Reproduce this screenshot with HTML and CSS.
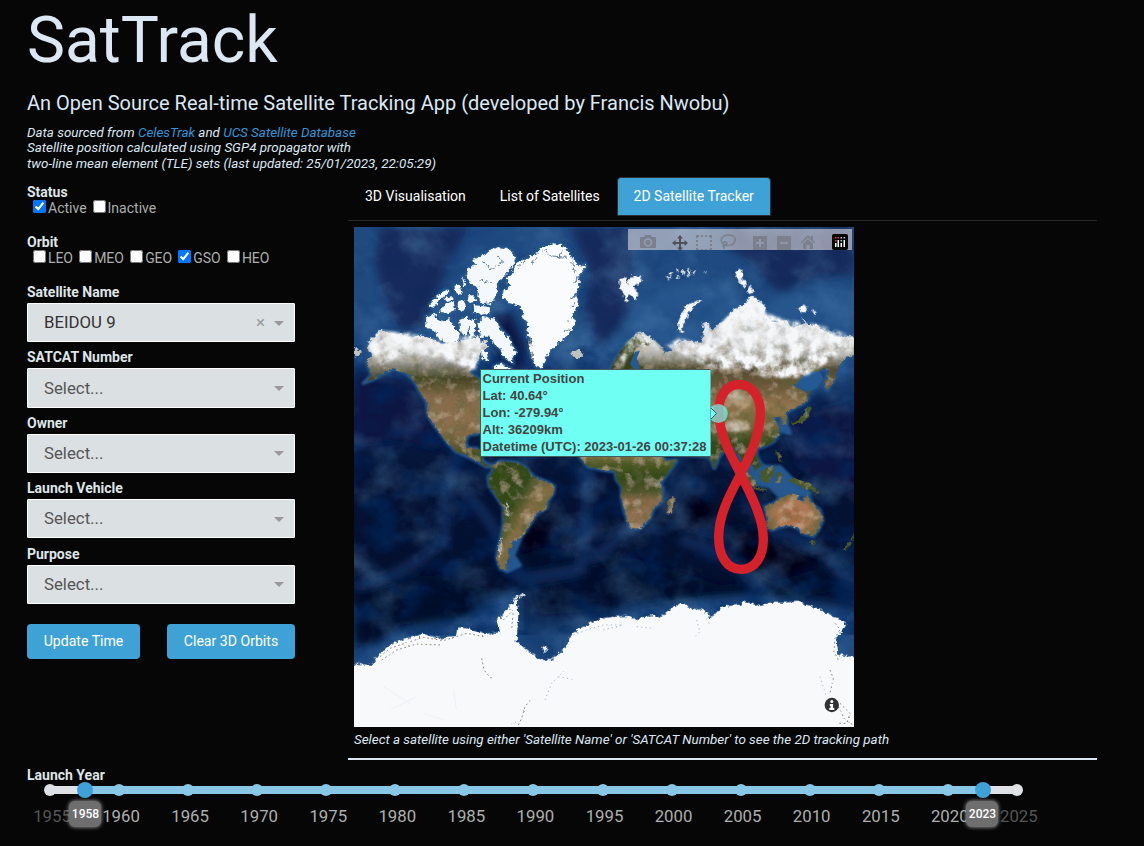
FILE: index.html
```
<!DOCTYPE html>
<html lang="en">
<head>
<meta charset="utf-8">
<title>SatTrack</title>
<link rel="stylesheet" href="styles.css">
</head>
<body>
<header class="header">
  <h1>SatTrack</h1>
  <h2>An Open Source Real-time Satellite Tracking App (developed by Francis Nwobu)</h2>
  <p class="source">Data sourced from <a>CelesTrak</a> and <a>UCS Satellite Database</a><br>Satellite position calculated using SGP4 propagator with<br>two-line mean element (TLE) sets (last updated: 25/01/2023, 22:05:29)</p>
</header>
<main class="content">
  <aside class="filters">
    <section class="checks status"><h3>Status</h3>
      <div class="options"><label><input type="checkbox" checked>Active</label><label><input type="checkbox">Inactive</label></div>
    </section>
    <section class="checks"><h3>Orbit</h3>
      <div class="options orbits"><label><input type="checkbox">LEO</label><label><input type="checkbox">MEO</label><label><input type="checkbox">GEO</label><label><input type="checkbox" checked>GSO</label><label><input type="checkbox">HEO</label></div>
    </section>
    <section class="field"><h3>Satellite Name</h3><div class="select chosen"><span>BEIDOU 9</span><b class="clear">×</b><i class="arrow"></i></div></section>
    <section class="field"><h3>SATCAT Number</h3><div class="select"><span>Select...</span><i class="arrow"></i></div></section>
    <section class="field"><h3>Owner</h3><div class="select"><span>Select...</span><i class="arrow"></i></div></section>
    <section class="field"><h3>Launch Vehicle</h3><div class="select"><span>Select...</span><i class="arrow"></i></div></section>
    <section class="field"><h3>Purpose</h3><div class="select"><span>Select...</span><i class="arrow"></i></div></section>
    <div class="actions"><button>Update Time</button><button class="wide">Clear 3D Orbits</button></div>
  </aside>
  <section class="viewer">
    <nav class="tabs"><a>3D Visualisation</a><a>List of Satellites</a><a class="active">2D Satellite Tracker</a></nav>
    <div class="map">
      <svg class="world" viewBox="354 227 500 500">
        <defs>
          <linearGradient id="sea" x1="0" y1="0" x2="0" y2="1">
            <stop offset="0" stop-color="#1f4a80"/><stop offset=".26" stop-color="#1f4b82"/><stop offset=".36" stop-color="#08204b"/><stop offset=".5" stop-color="#041234"/><stop offset=".72" stop-color="#030f2e"/><stop offset=".82" stop-color="#173f73"/>
          </linearGradient>
          <linearGradient id="america" gradientUnits="userSpaceOnUse" x1="0" y1="490" x2="0" y2="870">
            <stop offset="0" stop-color="#f5f6f7"/><stop offset=".15" stop-color="#d6d7d6"/><stop offset=".26" stop-color="#85827a"/><stop offset=".36" stop-color="#454325"/><stop offset=".5" stop-color="#846b4a"/><stop offset=".75" stop-color="#8d6f4e"/><stop offset="1" stop-color="#3c481d"/>
          </linearGradient>
          <linearGradient id="asia" gradientUnits="userSpaceOnUse" x1="0" y1="-220" x2="0" y2="310">
            <stop offset="0" stop-color="#fbfcfd"/><stop offset=".22" stop-color="#e1e3e6"/><stop offset=".34" stop-color="#aaa9a3"/><stop offset=".41" stop-color="#534a30"/><stop offset=".52" stop-color="#735d3f"/><stop offset=".62" stop-color="#957850"/><stop offset=".74" stop-color="#6c6338"/><stop offset=".82" stop-color="#374a1e"/><stop offset="1" stop-color="#354a1c"/>
          </linearGradient>
          <linearGradient id="africa" gradientUnits="userSpaceOnUse" x1="0" y1="255" x2="0" y2="480">
            <stop offset="0" stop-color="#8d7748"/><stop offset=".12" stop-color="#4c5824"/><stop offset=".3" stop-color="#324817"/><stop offset=".48" stop-color="#4d5428"/><stop offset=".6" stop-color="#866a49"/><stop offset="1" stop-color="#957656"/>
          </linearGradient>
          <linearGradient id="brazil" x1="0" y1="0" x2="1" y2="1">
            <stop offset="0" stop-color="#2f4618"/><stop offset=".38" stop-color="#32491a"/><stop offset=".52" stop-color="#826d45"/><stop offset=".75" stop-color="#7a6d3d"/><stop offset="1" stop-color="#6b5a3a"/>
          </linearGradient>
          <radialGradient id="outback"><stop offset="0" stop-color="#b06e4c"/><stop offset=".65" stop-color="#a97a56"/><stop offset="1" stop-color="#77673f"/></radialGradient>
          <filter id="coast" x="-5%" y="-5%" width="110%" height="110%">
            <feTurbulence type="fractalNoise" baseFrequency=".26" numOctaves="3" seed="8" result="n"/>
            <feDisplacementMap in="SourceGraphic" in2="n" scale="5" xChannelSelector="R" yChannelSelector="G" result="d"/>
            <feTurbulence type="fractalNoise" baseFrequency=".09" numOctaves="6" seed="4" result="t"/>
            <feColorMatrix in="t" type="matrix" values="0 0 0 0 .1  0 0 0 0 .12  0 0 0 0 .04  1.6 0 0 0 -.7" result="k"/>
            <feComposite in="k" in2="d" operator="in" result="kk"/>
            <feColorMatrix in="t" type="matrix" values="0 0 0 0 .68  0 0 0 0 .54  0 0 0 0 .38  0 1.3 0 0 -.68" result="l"/>
            <feComposite in="l" in2="d" operator="in" result="ll"/>
            <feMerge><feMergeNode in="d"/><feMergeNode in="kk"/><feMergeNode in="ll"/></feMerge>
          </filter>
          <filter id="ice" x="-5%" y="-5%" width="110%" height="110%">
            <feTurbulence type="fractalNoise" baseFrequency=".25" numOctaves="3" seed="11" result="n"/>
            <feDisplacementMap in="SourceGraphic" in2="n" scale="6" xChannelSelector="R" yChannelSelector="G"/>
          </filter>
          <filter id="snow" x="-5%" y="-5%" width="110%" height="110%">
            <feGaussianBlur in="SourceGraphic" stdDeviation="1.5" result="s"/>
            <feTurbulence type="fractalNoise" baseFrequency=".09" numOctaves="6" seed="17"/>
            <feColorMatrix type="matrix" values="0 0 0 0 .92  0 0 0 0 .93  0 0 0 0 .95  2.6 0 0 0 -.7"/>
            <feComposite in2="s" operator="in"/>
          </filter>
          <filter id="swell" x="0" y="0" width="100%" height="100%">
            <feTurbulence type="fractalNoise" baseFrequency=".02 .024" numOctaves="6" seed="21"/>
            <feColorMatrix type="matrix" values="0 0 0 0 .1  0 0 0 0 .26  0 0 0 0 .48  2.4 0 0 0 -1.1"/>
          </filter>
          <filter id="trench" x="0" y="0" width="100%" height="100%">
            <feTurbulence type="fractalNoise" baseFrequency=".03 .04" numOctaves="5" seed="33"/>
            <feColorMatrix type="matrix" values="0 0 0 0 0  0 0 0 0 .02  0 0 0 0 .11  0 3.2 0 0 -1.5"/>
          </filter>
          <filter id="soft" x="-20%" y="-20%" width="140%" height="140%"><feGaussianBlur stdDeviation="4"/></filter>
          <filter id="shelf" x="-20%" y="-20%" width="140%" height="140%"><feGaussianBlur stdDeviation="1.3"/></filter>
          <path id="na" d="M85 515L120 480 150 490 180 492 205 505 240 495 270 505 300 520 340 515 370 510 400 505 415 498 422 520 442 508 444 530 420 550 415 575 395 590 392 612 440 640 540 650 520 720 460 770 415 790 385 795 376 815 383 835 410 835 425 850 428 872 445 885 460 887 440 890 400 868 345 842 320 815 298 785 278 760 264 735 260 695 240 665 225 635 200 610 160 595 130 610 100 628 70 640 95 615 80 575 100 555 85 540Z"/>
          <path id="sa" d="M455 260L480 243 530 248 560 265 580 290 620 305 643 318 640 340 622 365 620 385 590 400 575 425 555 455 540 475 515 485 520 500 505 510 510 525 498 545 500 572 480 565 470 530 480 490 490 430 490 380 470 350 448 318 445 290 460 275Z"/>
          <path id="af" d="M-50 200L-30 262-5 290 40 300 75 305 80 330 95 350 95 385 105 430 120 475 150 475 180 445 190 415 215 395 218 355 210 340 240 300 260 272 225 270 200 240 150 200Z"/>
          <path id="as" d="M65-3L80-40 110-80 150-115 180-100 215-70 222-50 245-60 270-85 300-90 335-80 342-120 335-140 355-145 360-120 380-130 405-150 430-180 460-195 485-222 510-205 528-190 520-150 550-145 590-150 605-125 640-140 680-135 730-100 765-102 795-100 795-45 770-40 740 0 735 25 710 60 705 40 718-5 690 0 650 25 610 45 640 60 655 85 640 100 620 110 600 120 585 130 592 155 580 165 570 140 550 140 565 165 565 195 550 215 520 230 500 235 500 260 515 285 495 300 480 270 470 270 475 310 492 346 465 320 450 265 430 230 415 225 395 250 385 265 373 294 360 260 250 250 130 110 65 40Z"/>
          <path id="oz" d="M525 410L550 400 570 385 600 370 625 375 625 390 640 395 650 370 665 400 690 420 698 450 685 480 670 498 640 490 625 475 600 465 570 470 545 480 530 470 532 445Z"/>
          <path id="gr" d="M640 220L665 225 680 235 695 262 720 290 735 280 738 292 715 320 718 350 705 375 715 400 700 430 705 460 690 490 660 515 630 545 615 570 605 592 590 592 580 570 568 540 578 510 560 500 565 470 550 440 548 415 530 405 510 400 490 385 485 368 510 350 500 335 520 300 530 280 560 265 590 250 600 235Z"/>
          <path id="an" d="M30 280L95 285 118 250 150 225 180 212 250 192 300 205 350 200 355 172 380 175 440 195 480 185 470 150 490 135 510 110 530 88 535 130 530 215 560 240 605 270 635 270 680 230 690 200 720 175 760 155 800 142 860 138 890 148 940 135 960 145 980 125 1020 100 1050 115 1090 120 1112 142 1130 130 1145 110 1200 105 1210 92 1260 108 1290 98 1330 98 1375 95 1430 115 1470 135 1500 150 1520 165 1500 190 1490 210 1495 255 1550 262 1550 490 30 490Z"/>
          <g id="isles">
            <path d="M455 240L480 232 510 240 528 262 520 285 500 310 480 330 470 345 475 370 455 400 430 402 412 380 415 350 395 345 380 320 385 295 405 285 400 270 430 255Z"/>
            <path d="M258 440L285 432 290 450 310 455 330 445 340 470 360 490 350 515 320 518 290 505 285 480 260 475Z"/>
            <path d="M412 460L430 440 465 450 480 475 505 500 515 525 528 545 515 565 520 580 490 560 485 540 465 525 450 500 420 500Z"/>
            <path d="M398 405L445 410 452 428 420 434 400 425ZM358 450L380 442 395 460 375 500 360 480ZM268 405L290 382 318 358 326 366 298 392 280 414ZM342 345L360 345 366 374 350 370ZM320 400L342 394 345 420 318 430 298 425ZM350 405L362 388 376 395 378 418 360 422ZM380 380L400 375 410 395 388 398ZM392 450L406 446 404 500 386 508ZM310 385L340 378 340 390 316 394ZM460 590L485 580 515 598 470 604ZM425 540L440 545 445 570 430 568ZM366 320L380 345 372 350Z"/>
          </g>
        </defs>
        <rect x="354" y="227" width="500" height="500" fill="url(#sea)"/>
        <g filter="url(#soft)">
          <path d="M380 227L470 227 450 260 430 310 424 328 400 330 385 305 375 260ZM570 227L632 227 632 320 622 355 598 345 585 310 590 270ZM730 227L854 227 854 275 815 277 795 295 775 290 750 260 730 250Z" fill="#122b5b"/>
          <path d="M485 320L510 312 525 345 525 370 500 365ZM354 370L410 382 430 420 440 450 400 440 354 445ZM782 420L854 400 854 490 800 470Z" fill="#071943"/>
          <path d="M354 580L440 575 490 590 470 615 400 625 375 645 354 645ZM520 545L640 560 720 585 780 580 850 560 854 590 780 597 740 590 700 600 610 610 580 612 540 615Z" fill="#020b29"/>
          <path d="M460 445Q440 500 445 540Q400 580 354 585M460 490Q490 510 520 580M585 465Q590 520 580 570L520 580M590 560Q650 520 670 470L700 440M680 540Q730 550 760 590M770 530Q820 540 854 590" fill="none" stroke="#122f5e" stroke-width="9"/>
          <path d="M510 525L535 495 555 510 545 545 525 555ZM690 500L710 500 712 525 690 530ZM730 520L780 545 830 555 780 580 750 570Z" fill="#010519"/>
          <path d="M354 660L410 635 465 623 500 595 520 590 520 640 550 662 580 640 620 612 700 600 760 595 820 605 854 610 854 660 354 680Z" fill="#1e4a80"/>
          <path d="M600 350L622 326 635 295 660 288 700 280 730 290 760 310 800 285 854 290 854 370 805 395 780 360 640 355Z" fill="#26568d"/>
        </g>
        <rect x="354" y="227" width="500" height="500" filter="url(#swell)" opacity=".45"/>
        <rect x="354" y="345" width="500" height="290" filter="url(#trench)" opacity=".6"/>
        <rect x="354" y="227" width="500" height="118" filter="url(#trench)" opacity=".14"/>
        <g fill="#25588f" stroke="#25588f" stroke-width="11" filter="url(#shelf)" stroke-linejoin="round">
          <g transform="translate(340 170) scale(.33333)"><use href="#na"/><use href="#gr"/><use href="#isles"/></g>
          <g transform="translate(340 380) scale(.33333)"><use href="#sa"/><path d="M500 575L540 555 512 515 515 488 540 478Z"/></g>
          <g transform="translate(590 370) scale(.33333)"><use href="#af"/><use href="#as"/><use href="#oz"/><path d="M560 180L600 190 580 140ZM480 270L530 290 570 290 610 330 660 370 575 385 540 350 490 340Z"/></g>
        </g>
        <g filter="url(#coast)">
          <use href="#na" transform="translate(340 170) scale(.33333)" fill="url(#america)"/>
          <use href="#sa" transform="translate(340 380) scale(.33333)" fill="url(#brazil)"/>
          <g transform="translate(590 370) scale(.33333)">
            <use href="#af" fill="url(#africa)"/><use href="#as" fill="url(#asia)"/><use href="#oz" fill="url(#outback)"/>
            <path d="M245 378L257 380 245 430 230 430 232 400Z" fill="#7c6342"/>
            <path d="M600 160L630 145 645 130 655 105 665 110 650 150 620 165ZM648 45L658 55 656 90 648 85ZM435 260L450 278 488 325 505 348 490 350 465 330ZM508 305L530 295 550 285 552 305 540 335 515 332ZM490 352L530 357 530 364 492 358ZM560 308L575 310 568 340 560 338ZM555 240L568 245 575 280 562 260ZM590 325L620 328 660 340 695 372 660 362 620 345ZM660 512L675 514 670 530ZM790 492L798 498 780 515ZM778 515L785 522 762 544 758 540Z" fill="#48572b"/>
            <path d="M65-3L80-40 110-80 150-110 180-75 145-80 130-50 148-20 160 0Z" fill="#34401c"/>
          </g>
        </g>
        <g transform="translate(590 370) scale(.33333)">
          <path d="M132-2L120-20 135-55 150-58 140-35 150-2ZM620 40L650 5 690 5 700 25 680 55 650 65Z" fill="#245a94"/>
          <g filter="url(#soft)" opacity=".8"><path d="M405 65L450 55 490 85 480 110 430 105ZM400 150L460 150 485 180 440 185Z" fill="#c4ae90" opacity=".6"/></g>
        </g>
        <g filter="url(#snow)">
          <path d="M368 347L381 331 410 333 435 340 475 335 482 343 476 370 470 370 440 358 405 352 382 366Z" fill="#fff"/>
          <path d="M665 346L680 338 703 345 717 326 735 310 753 297 765 312 785 320 820 325 854 337 854 350 835 358 810 374 795 378 768 378 745 370 710 368 685 355Z" fill="#fff"/>
          <path d="M616 365L627 343 640 332 656 344 660 352 640 345 627 357 622 368Z" fill="#fff" opacity=".8"/>
          <path d="M726 394L736 389 746 398 734 401ZM722 425L735 420 750 424 745 431 728 433Z" fill="#fff" opacity=".45"/>
        </g>
        <g filter="url(#ice)">
          <g transform="translate(340 170) scale(.33333)">
            <use href="#gr" fill="#f9fbfc"/><use href="#isles" fill="#f4f8fa"/>
            <path d="M690 548L710 538 735 548 720 562 700 560ZM42 530L66 545 50 560 42 555Z" fill="#bfc2bd"/>
            <path d="M720 315L700 340M712 375L690 385M705 400L688 415M700 440L680 455M690 475L672 485M535 290L560 272M575 285L588 265M610 240L635 260M640 258L680 262M670 240L655 262M695 275L705 310M470 258L490 275 450 300M430 275L450 290M420 330L450 340" fill="none" stroke="#5b7ca3" stroke-width="3"/>
            <path d="M566 500L572 530M575 545L582 570" fill="none" stroke="#8b8474" stroke-width="5"/>
          </g>
          <g transform="translate(590 370) scale(.33333)" fill="#f5f7f8">
            <path d="M88-275L105-278 112-258 120-280 152-282 155-266 130-252 145-225 140-210 120-225 108-204 98-235 90-245ZM235-288L248-292 242-282ZM258-305L265-302 262-290ZM275-300L284-298 278-285ZM260-282L274-280 262-275ZM290-290L298-305 302-285 292-278ZM308-300L318-302 310-285ZM228-280L240-278 233-272ZM438-300L450-305 460-280 450-270 438-278ZM445-272L465-270 468-248 452-250ZM478-258L492-235 470-230ZM318-208L335-208 310-190 290-160 276-125 284-110 265-118 265-145 285-190ZM622-185L645-195 655-180 640-172ZM665-180L685-172 675-165ZM640-155L655-145 638-145ZM342-296L350-294 344-290Z"/>
          </g>
          <g transform="translate(340 380) scale(.33333)"><path d="M515 655L550 642M478 530L483 475M500 365L503 410" fill="none" stroke="#dfe7ec" stroke-width="3"/></g>
          <g transform="translate(340 570) scale(.33333)">
            <use href="#an" fill="#f7f9fb"/><path d="M535 85L555 72M520 95L530 78M610 232L622 236 614 243Z" stroke="#f4f7f9" stroke-width="5"/>
          </g>
        </g>
        <g transform="translate(340 570) scale(.33333)" fill="none" stroke-width="3" filter="url(#ice)">
          <path d="M120 260L150 235 210 215 250 202 310 212 380 190 430 200M125 270L170 240 230 222 300 225M425 265L432 300 450 322 460 325M535 465L545 445 555 410 575 385M515 462L528 456M490 150L520 120 515 180M1485 160L1500 178 1485 205 1482 245 1495 270M1470 300L1480 325 1470 370M1500 400L1530 430 1520 460 1490 460M1495 410L1515 450 1540 465" stroke="#8c8675" stroke-dasharray="5 8"/>
          <path d="M615 390L635 340 680 295M655 320L700 328M1070 150L1080 185 1065 200M1100 145L1110 165M1440 320L1460 380M700 195L740 180 790 165 850 165M790 180L850 165M890 170L940 175" stroke="#a8bed3" stroke-dasharray="4 9"/>
          <path d="M130 350L210 400M150 420L230 380M250 430L310 450M340 360L350 420" stroke="#eef1f3"/>
        </g>
        <path d="M447 43C485 43 512 80 511 130C510 200 475 265 452 312C425 365 386 430 386 500C386 560 412 598 453 598C495 598 521 560 520 505C519 440 480 370 452 312C425 260 390 200 386 130C384 80 410 43 447 43Z" transform="translate(590 370) scale(.33333)" fill="none" stroke="#d5222a" stroke-width="28"/>
        <circle cx="718.3" cy="413.5" r="9.5" fill="#6ffff3" opacity=".68"/>
        <path d="M710 407L716.5 413.5 710 420" fill="#6ffff3" stroke="#485b5b"/>
        <g transform="translate(831.8 705)"><circle r="7.2" fill="#303334"/><circle cy="-3.6" r="1.5" fill="#fff"/><path d="M-2-1H1.3V3H2.5V5H-2.5V3H-1.3V1H-2Z" fill="#fff"/></g>
      </svg>
      <div class="modebar">
        <svg class="camera" viewBox="0 0 16 16"><path fill-rule="evenodd" d="M1 3h3l1.2-2h5.6L12 3h3q1 0 1 1v9q0 1-1 1H1q-1 0-1-1V4q0-1 1-1zm7 1.2a4.2 4.2 0 1 0 0 8.4 4.2 4.2 0 0 0 0-8.4zm0 1.500a2.7 2.7 0 1 1 0 5.4 2.7 2.7 0 0 1 0-5.4z"/></svg>
        <svg class="pan" viewBox="0 0 16 16"><path d="M8 0l3 3.500H9V7h3.500V5L16 8l-3.500 3V9H9v3.500h2L8 16l-3-3.500h2V9H3.500v2L0 8l3.500-3v2H7V3.500H5z"/></svg>
        <svg class="box" viewBox="0 0 16 16"><path d="M0 0h3v2H2v1H0zM5 0h2v2H5zM9 0h2v2H9zM13 0h3v3h-2V2h-1zM0 5h2v2H0zM14 5h2v2h-2zM0 9h2v2H0zM14 9h2v2h-2zM0 13h2v1h1v2H0zM5 14h2v2H5zM9 14h2v2H9zM14 13h2v3h-3v-2h1z"/></svg>
        <svg class="lasso" viewBox="0 0 16 16"><path d="M3 10C-1 6 2 1 9 1c5 0 7 3 6 6-1 4-7 6-12 3m1-2c2-1 4 1 2 3s-4-1-2-3m-1 3c0 2 2 2 1 4" fill="none" stroke="currentColor" stroke-width="1.5"/></svg>
        <svg class="plus" viewBox="0 0 16 16"><path fill-rule="evenodd" d="M1 1h14v14H1zM7 4v3H4v2h3v3h2V9h3V7H9V4z"/></svg>
        <svg class="minus" viewBox="0 0 16 16"><path fill-rule="evenodd" d="M1 1h14v14H1zM4 7v2h8V7z"/></svg>
        <svg class="home" viewBox="0 0 16 16"><path d="M8 1l3 3V2h2v4l2.500 2.500-1 1L8 3.500 1.500 9.500l-1-1zM8 5l5 4.500V15H9.500v-4h-3v4H3V9.500z"/></svg>
        <svg class="plotly" viewBox="0 0 16 16"><rect width="16" height="16" rx="2" fill="#000"/><path d="M3 9h1.500v4H3zM5.500 6H7v7H5.500zM8.500 9H10v4H8.500zM11.500 6H13v7h-1.500z" fill="#fff"/><path d="M3 3h1.500v1.500H3zM3 6h1.500v1.500H3zM5.500 3H7v1.500H5.500z" fill="#ee2e69"/><path d="M8.500 3H10v1.500H8.500zM8.500 6H10v1.500H8.500zM11.500 3H13v1.500h-1.500z" fill="#a9cbe0"/></svg>
      </div>
      <div class="hover">Current Position<br>Lat: 40.64°<br>Lon: -279.94°<br>Alt: 36209km<br>Datetime (UTC): 2023-01-26 00:37:28</div>
    </div>
    <p class="caption">Select a satellite using either 'Satellite Name' or 'SATCAT Number' to see the 2D tracking path</p>
  </section>
</main>
<footer class="launch">
  <h3>Launch Year</h3>
  <div class="slider">
    <div class="track"></div>
    <div class="dots"><i class="off"></i><i></i><i></i><i></i><i></i><i></i><i></i><i></i><i></i><i></i><i></i><i></i><i></i><i></i><i class="off"></i></div>
    <span class="handle start"></span><span class="handle end"></span>
    <div class="years"><span class="off">1955</span><span>1960</span><span>1965</span><span>1970</span><span>1975</span><span>1980</span><span>1985</span><span>1990</span><span>1995</span><span>2000</span><span>2005</span><span>2010</span><span>2015</span><span>2020</span><span class="off">2025</span></div>
    <b class="tip start">1958</b><b class="tip end">2023</b>
  </div>
</footer>
</body>
</html>
```
FILE: styles.css
```
* { box-sizing: border-box; }
body { margin: 0; height: 846px; overflow: hidden; padding: 0 47px 0 27px; background: #060606; color: #adafae; font: 14px/16px Roboto, sans-serif; }
h1, h2, h3, p { margin: 0; }
h1 { padding-top: 2px; height: 92px; font-size: 64px; line-height: 77px; font-weight: 400; color: #dbe8f3; }
h2 { height: 32.6px; font-size: 20px; line-height: 23px; font-weight: 400; color: #dbe8f3; }
.source { height: 53.4px; font-size: 13.4px; line-height: 15.6px; font-style: italic; color: #dbe8f3; }
.source a { color: #3296d8; }
.content { display: grid; grid-template-columns: 268px 749px; column-gap: 53px; height: 582px; }
.filters { padding-top: 6px; }
h3 { font-size: 14px; line-height: 16px; font-weight: 700; color: #dfe5e8; }
.checks { height: 50px; }
.options { display: flex; padding-left: 6px; gap: 6px; height: 16px; }
.orbits { letter-spacing: -.1px; gap: 6.4px; }
.options label { display: flex; gap: 2px; align-items: center; white-space: nowrap; }
.options input { width: 13px; height: 13px; margin: 0 0 3px; }
.field { height: 65.4px; }
.select { display: flex; align-items: center; height: 39.3px; margin-top: 3px; padding: 0 10px 1px 16px; background: #dbe0e2; border: 1px solid #fff; border-radius: 1px; font-size: 16.8px; color: #555; }
.select span { flex: 1; }
.chosen { color: #333; }
.clear { margin-right: 9px; font: 17px/17px Roboto, sans-serif; color: #999; }
.arrow { margin-top: 2px; border: 5px solid transparent; border-top-color: #999; border-bottom: 0; }
.actions { display: flex; gap: 27px; padding-top: 13px; }
button { width: 113px; height: 35px; padding: 0 0 1px; border: 0; border-radius: 4px; background: #3fa2d6; color: #fff; font: 14.1px/16px Roboto, sans-serif; }
.wide { width: 128px; }
.tabs { display: flex; height: 43px; border-bottom: 1px solid #282828; color: #fff; }
.tabs a { height: 38px; padding: 10px 16px 0 17px; }
.tabs a + a { margin-left: 1px; }
.tabs .active { width: 154px; height: 39px; margin-top: -1px; padding: 10px 0 0; text-align: center; border: 1px solid #2c3035; border-radius: 4px 4px 0 0; background: #3fa2d6; }
.map { position: relative; width: 500px; height: 500px; margin: 6px 0 0 6px; }
.world { display: block; width: 500px; height: 500px; }
.modebar { position: absolute; top: 2px; right: 2px; display: flex; width: 224px; height: 21px; overflow: hidden; padding: 6px 4px 0 12px; background: rgba(200, 200, 208, .68); color: #7c808c; }
.modebar svg { width: 16px; height: 16px; flex: none; fill: currentColor; margin-right: 8px; }
.modebar .camera, .modebar .lasso, .modebar .home { margin: -1px 16px 0 0; }
.modebar .pan { color: #50525b; }
.modebar .plotly { margin: -1px 0 0; }
.hover { position: absolute; left: 125.5px; top: 142.5px; width: 231px; height: 88px; padding: 0 2px; border: 1px solid #485b5b; border-right-color: #5eb6b0; background: #6ffff3; color: #444; font: bold 13px/17px "Liberation Sans", Arial, sans-serif; white-space: nowrap; }
.caption { height: 33px; padding: 5px 6px 0; border-bottom: 2px solid #dbe8f3; font-size: 13.4px; font-style: italic; color: #dbe8f3; }
.launch { padding-top: 7px; }
.slider { position: relative; width: 967px; height: 50px; margin: -2px 0 0 23px; padding-top: 5px; }
.track { height: 8px; background: linear-gradient(90deg, #dee2e6 42px, #89c7e6 42px, #89c7e6 933px, #dee2e6 933px); border-radius: 4px; }
.dots, .years { display: flex; justify-content: space-between; }
.dots { height: 12px; margin: -10px -6px 0; }
.dots i { width: 12px; height: 12px; border-radius: 50%; background: #89c7e6; }
.dots .off { background: #dee2e6; }
.handle { position: absolute; top: 1px; width: 16px; height: 16px; border-radius: 50%; background: #3fa2d6; }
.handle.start { left: 27px; }
.handle.end { left: 925px; }
.years { margin: 10px -22px 0 -18px; font-size: 16.8px; line-height: 20px; }
.years span { width: 40px; text-align: center; }
.years .off { color: #555; }
.tip { position: absolute; top: 20px; width: 32px; height: 26px; padding-left: 1px; border-radius: 6px; background: #6e6e6e; box-shadow: 0 0 4px #aaa; color: #fff; font-size: 12px; line-height: 26px; font-weight: 500; text-align: center; }
.tip.start { left: 19px; }
.tip.end { left: 916px; }
```
